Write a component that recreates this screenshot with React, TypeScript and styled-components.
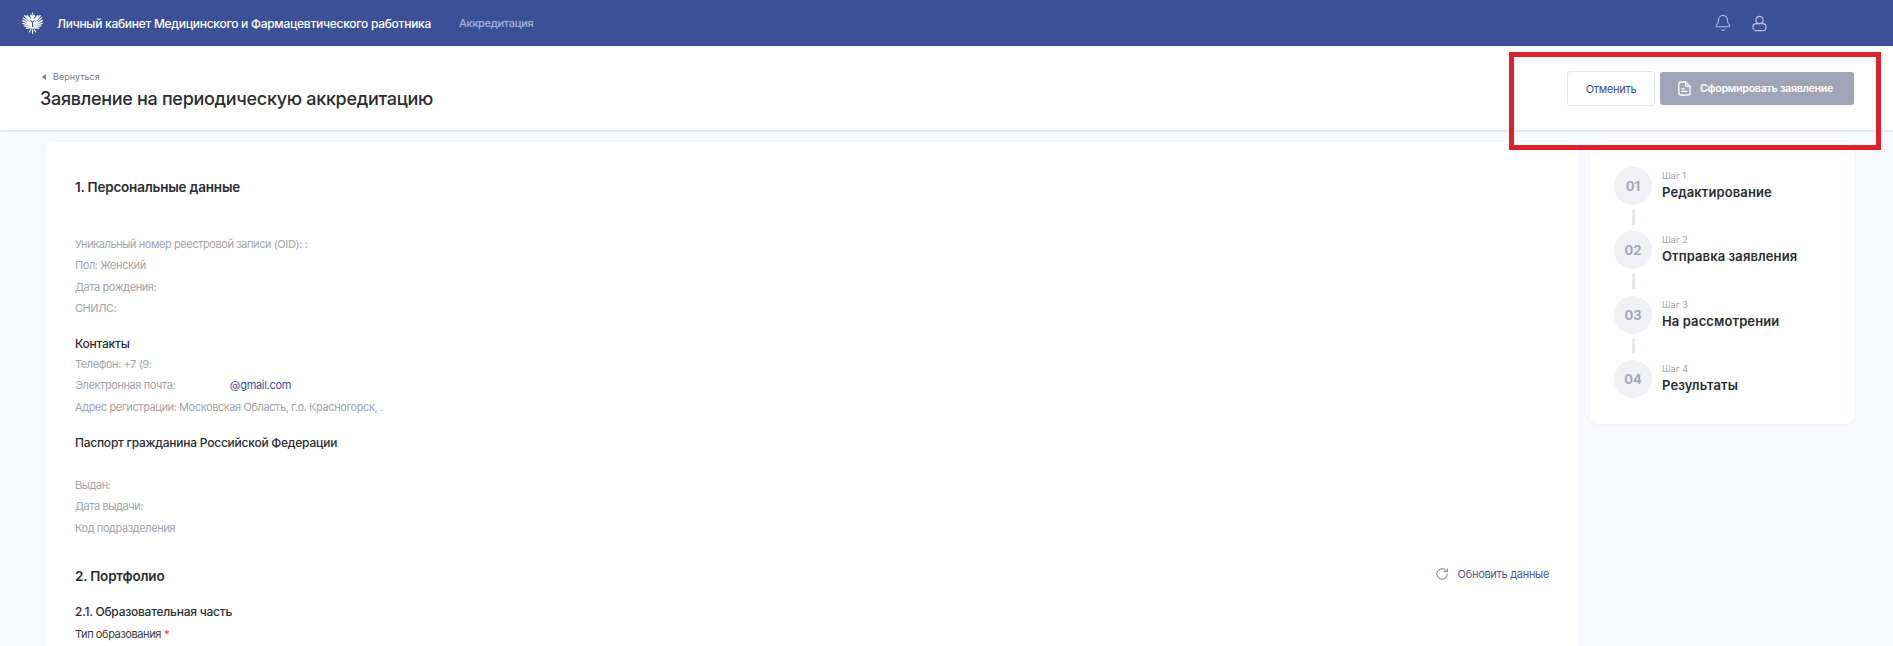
import styled, { createGlobalStyle } from 'styled-components'
import { Bell, RotateCw } from 'lucide-react'

const personalRows = ['Уникальный номер реестровой записи (OID): :', 'Пол: Женский', 'Дата рождения:', 'СНИЛС:']
const passportRows = ['Выдан:', 'Дата выдачи:', 'Код подразделения']
const steps = ['Редактирование', 'Отправка заявления', 'На рассмотрении', 'Результаты']

const App = () => {
  return (
    <Page>
      <GlobalStyle />
      <TopBar>
        <Eagle viewBox="0 0 24 24" aria-hidden="true">
          <g fill="none" stroke="#fff" strokeLinecap="round">
            <path strokeWidth="1.5" d="M9 7.5 6.5 4.5M8.6 9.5 4 4.5M8.4 11.5 2.6 6.8M8.2 13 1.8 9.6M8.4 14.5 2 12.4M9 16 3.4 15M9.5 17 5.6 17.4" />
            <path strokeWidth="1.5" d="M15 7.5 17.5 4.5M15.4 9.5 20 4.5M15.6 11.5 21.4 6.8M15.8 13 22.2 9.6M15.6 14.5 22 12.4M15 16 20.6 15M14.5 17 18.4 17.4" />
            <path strokeWidth="1.2" d="M10.2 19 8.6 21.4M12 19.4V23M13.8 19l1.6 2.4" />
          </g>
          <path d="M12 .8 13 2.4 12 3.4 11 2.4 12 .8Z M9.8 3.6c.9-.5 1.7-.2 2.2.5.5-.7 1.3-1 2.2-.5l.8 1.6-1.2.2-.4 2.2h-2.8l-.4-2.2-1.2-.2.8-1.6Z" fill="#fff" />
          <path d="M9 7.4h6l.4 6.2-1.4 4.4h-4l-1.4-4.4L9 7.4Z" fill="#fff" />
          <path d="M10 9.2l2 2.4 2-2.4M12 11.6v4.6" fill="none" stroke="#3c5098" strokeWidth="1.1" />
        </Eagle>
        <Brand>Личный кабинет Медицинского и Фармацевтического работника</Brand>
        <NavLink>Аккредитация</NavLink>
        <TopIcons>
          <Bell size={18} strokeWidth={1.4} />
          <UserGlyph viewBox="0 0 16 17" aria-hidden="true">
            <circle cx="8" cy="4.8" r="3.9" />
            <rect x="1" y="8.7" width="14" height="7.4" rx="3.7" />
          </UserGlyph>
        </TopIcons>
      </TopBar>

      <PageHead>
        <div>
          <BackLink>
            <BackArrow />
            Вернуться
          </BackLink>
          <PageTitle>Заявление на периодическую аккредитацию</PageTitle>
        </div>
        <Actions>
          <CancelButton>Отменить</CancelButton>
          <SubmitButton>
            <DocGlyph viewBox="0 0 14 16" aria-hidden="true">
              <path d="M2.6 1h5.6L13 5.6v7.2A2.2 2.2 0 0 1 10.8 15H3.2A2.2 2.2 0 0 1 1 12.8V2.6C1 1.7 1.7 1 2.6 1Z" />
              <path d="M8 1v3.2c0 .9.6 1.5 1.5 1.5H13M4 8.4h2.6M4 11.2h5.6" />
            </DocGlyph>
            Сформировать заявление
          </SubmitButton>
        </Actions>
      </PageHead>

      <Content>
        <MainCard>
          <SectionTitle>1. Персональные данные</SectionTitle>
          <RowList $top={38}>
            {personalRows.map((row) => (
              <InfoRow key={row}>{row}</InfoRow>
            ))}
          </RowList>
          <SubTitle $top={14}>Контакты</SubTitle>
          <RowList $top={0}>
            <InfoRow>Телефон: +7 (9:</InfoRow>
            <InfoRow>
              Электронная почта: <EmailGap />
              <Email>@gmail.com</Email>
            </InfoRow>
            <InfoRow>Адрес регистрации: Московская Область, г.о. Красногорск, .</InfoRow>
          </RowList>
          <SubTitle $top={14}>Паспорт гражданина Российской Федерации</SubTitle>
          <RowList $top={22}>
            {passportRows.map((row) => (
              <InfoRow key={row}>{row}</InfoRow>
            ))}
          </RowList>
          <PortfolioHead>
            <SectionTitle>2. Портфолио</SectionTitle>
            <RefreshLink>
              <RotateCw size={14} strokeWidth={1.6} color="#6f7690" />
              Обновить данные
            </RefreshLink>
          </PortfolioHead>
          <SubTitle $top={16}>2.1. Образовательная часть</SubTitle>
          <FieldLabel>
            Тип образования<Required>*</Required>
          </FieldLabel>
        </MainCard>

        <StepsCard>
          {steps.map((name, i) => (
            <Step key={name}>
              <StepRail>
                <StepNumber>{`0${i + 1}`}</StepNumber>
                {i < steps.length - 1 && <StepLine />}
              </StepRail>
              <div>
                <StepCaption>{`Шаг ${i + 1}`}</StepCaption>
                <StepName>{name}</StepName>
              </div>
            </Step>
          ))}
        </StepsCard>
      </Content>

      <Highlight />
    </Page>
  )
}

const GlobalStyle = createGlobalStyle`
  html, body {
    margin: 0;
    background: #f8faff;
  }
  * {
    box-sizing: border-box;
  }
`

const Page = styled.div`
  position: relative;
  width: 1893px;
  height: 646px;
  overflow: hidden;
  background: #f8faff;
  font-family: Inter, 'Noto Sans', sans-serif;
  color: #2b2d33;
`

const TopBar = styled.header`
  display: flex;
  align-items: center;
  height: 46px;
  padding: 0 20px 0 21px;
  background: #3c5098;
  color: #fff;
`

const Eagle = styled.svg`
  width: 23px;
  height: 24px;
  margin-right: 13px;
`

const Brand = styled.div`
  font-size: 12px;
  font-weight: 500;
  letter-spacing: -0.28px;
  white-space: nowrap;
`

const NavLink = styled.div`
  margin-left: 28px;
  font-size: 11px;
  font-weight: 500;
  letter-spacing: -0.3px;
  color: #a6b2de;
`

const TopIcons = styled.div`
  display: flex;
  align-items: center;
  gap: 20px;
  margin-left: auto;
  margin-right: 106px;
  color: #b4c0ee;
`

const UserGlyph = styled.svg`
  width: 15px;
  height: 17px;
  fill: none;
  stroke: #b4c0ee;
  stroke-width: 1.3;
`

const PageHead = styled.div`
  display: flex;
  justify-content: space-between;
  align-items: flex-start;
  height: 84px;
  padding: 25px 39px 0 40px;
  background: #fff;
  box-shadow: 0 1px 3px rgba(60, 80, 152, 0.18);
`

const BackLink = styled.div`
  display: flex;
  align-items: center;
  gap: 7px;
  font-size: 9px;
  line-height: 12px;
  color: #75787f;
  margin-left: 2px;
`

const BackArrow = styled.span`
  width: 0;
  height: 0;
  border-top: 3.5px solid transparent;
  border-bottom: 3.5px solid transparent;
  border-right: 4px solid #80838c;
`

const PageTitle = styled.h1`
  margin: 3px 0 0;
  font-size: 18px;
  line-height: 26px;
  font-weight: 500;
  letter-spacing: -0.3px;
  color: #2b2d33;
`

const Actions = styled.div`
  display: flex;
  align-items: center;
  gap: 5px;
`

const CancelButton = styled.button`
  width: 88px;
  height: 35px;
  border: 1px solid #e3e6ee;
  border-radius: 3px;
  background: #fff;
  font: 400 11px Inter, sans-serif;
  letter-spacing: -0.3px;
  color: #3c5088;
`

const SubmitButton = styled.button`
  display: flex;
  align-items: center;
  justify-content: center;
  gap: 9px;
  width: 194px;
  height: 33px;
  padding-left: 3px;
  border: 0;
  border-radius: 3px;
  background: #a1a4b6;
  font: 600 10.7px Inter, sans-serif;
  letter-spacing: -0.3px;
  white-space: nowrap;
  color: #fff;
`

const DocGlyph = styled.svg`
  width: 13px;
  height: 15px;
  fill: none;
  stroke: #fff;
  stroke-width: 1.4;
  stroke-linecap: round;
  stroke-linejoin: round;
`

const Content = styled.main`
  display: flex;
  align-items: flex-start;
  gap: 11px;
  padding: 12px 39px 0 45px;
`

const MainCard = styled.section`
  flex: 1;
  height: 560px;
  padding: 36px 30px 0;
  border-radius: 8px;
  background: #fff;
  box-shadow: 0 1px 4px rgba(60, 80, 152, 0.05);
`

const SectionTitle = styled.h2`
  margin: 0;
  font-size: 13.5px;
  line-height: 18px;
  font-weight: 600;
  letter-spacing: -0.2px;
  color: #2b2d33;
`

const RowList = styled.div<{ $top: number }>`
  display: flex;
  flex-direction: column;
  margin-top: ${({ $top }) => $top}px;
`

const InfoRow = styled.div`
  font-size: 11px;
  line-height: 21.3px;
  letter-spacing: -0.42px;
  color: #a3a5ab;
  white-space: nowrap;
`

const EmailGap = styled.span`
  display: inline-block;
  width: 52px;
`

const Email = styled.span`
  letter-spacing: -0.3px;
  color: #3c5098;
`

const SubTitle = styled.h3<{ $top: number }>`
  margin: ${({ $top }) => $top}px 0 0;
  font-size: 12px;
  line-height: 21px;
  font-weight: 500;
  letter-spacing: -0.24px;
  color: #2b2d33;
`

const PortfolioHead = styled.div`
  display: flex;
  justify-content: space-between;
  align-items: center;
  margin-top: 28px;
`

const RefreshLink = styled.div`
  display: flex;
  align-items: center;
  gap: 9px;
  font-size: 11px;
  letter-spacing: -0.3px;
  color: #4a5b95;
  margin-top: -4px;
`

const FieldLabel = styled.div`
  margin-top: 2px;
  font-size: 11px;
  line-height: 20px;
  letter-spacing: -0.42px;
  color: #3a3c42;
`

const Required = styled.span`
  margin-left: 3px;
  color: #e0394a;
`

const StepsCard = styled.aside`
  display: flex;
  flex-direction: column;
  width: 264px;
  height: 282px;
  padding: 25px 24px 0;
  border-radius: 8px;
  background: #fff;
  box-shadow: 0 1px 4px rgba(60, 80, 152, 0.06);
`

const Step = styled.div`
  display: flex;
  gap: 10px;
  height: 64.5px;
`

const StepRail = styled.div`
  display: flex;
  flex-direction: column;
  align-items: center;
  width: 38px;
`

const StepNumber = styled.div`
  display: flex;
  align-items: center;
  justify-content: center;
  flex: none;
  width: 38px;
  height: 38px;
  border-radius: 50%;
  background: #f1f1f5;
  font-size: 13px;
  font-weight: 700;
  color: #a4a6b8;
`

const StepLine = styled.div`
  width: 3px;
  height: 15px;
  margin-top: 5px;
  background: #e6e7ec;
`

const StepCaption = styled.div`
  margin-top: 3px;
  font-size: 9px;
  line-height: 12px;
  color: #a7a9b0;
`

const StepName = styled.div`
  margin-top: 1px;
  font-size: 13px;
  line-height: 18px;
  font-weight: 600;
  letter-spacing: 0.1px;
  white-space: nowrap;
  color: #2b2d33;
`

// annotation drawn over the screenshot
const Highlight = styled.div`
  position: absolute;
  left: 1509px;
  top: 52px;
  width: 372px;
  height: 98px;
  border: 5px solid #dd212f;
  pointer-events: none;
`

export default App
